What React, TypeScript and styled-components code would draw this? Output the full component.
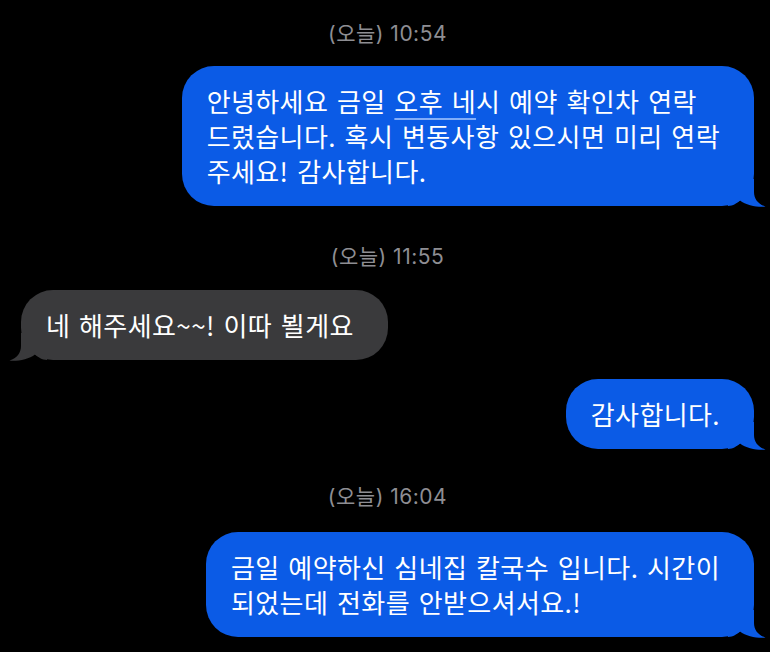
import React from "react";
import styled, { createGlobalStyle } from "styled-components";

const Global = createGlobalStyle`
  html, body { margin: 0; padding: 0; background: #000; }
  body { width: 770px; height: 652px; overflow: hidden; }
`;

const BLUE = "#0b5be6";
const GRAY = "#3a3a3c";

const Screen = styled.div`
  width: 770px;
  height: 652px;
  background: #000;
  display: flex;
  flex-direction: column;
  padding: 22px 16px 0 21px;
  box-sizing: border-box;
  font-family: "Noto Sans CJK KR", "Noto Sans", sans-serif;
  overflow: hidden;
`;

const Stamp = styled.div<{ $top: number; $bottom: number }>`
  align-self: center;
  margin: ${(p) => p.$top}px 0 ${(p) => p.$bottom}px 0;
  font-family: "Inter", "Noto Sans CJK KR", sans-serif;
  font-size: 21px;
  line-height: 24px;
  color: #8e8e93;
  letter-spacing: 0.5px;
`;

const Row = styled.div<{ $mine: boolean; $gap: number }>`
  display: flex;
  justify-content: ${(p) => (p.$mine ? "flex-end" : "flex-start")};
  margin-bottom: ${(p) => p.$gap}px;
`;

const Bubble = styled.div<{ $mine: boolean }>`
  position: relative;
  background: ${(p) => (p.$mine ? BLUE : GRAY)};
  color: #fff;
  border-radius: 32px;
  padding: 17px 34px 18px 25px;
  font-size: 26px;
  line-height: 35px;
  letter-spacing: 0.4px;
  word-spacing: 2.5px;
  white-space: pre-line;
`;

const Tail = styled.svg<{ $mine: boolean }>`
  position: absolute;
  bottom: -1px;
  width: 38px;
  height: 28px;
  ${(p) =>
    p.$mine
      ? "right: -12px;"
      : "left: -12px; transform: scaleX(-1);"}
`;

const Link = styled.span`
  text-decoration: underline;
  text-decoration-color: rgba(170, 200, 255, 0.75);
  text-decoration-thickness: 1.5px;
  text-underline-offset: 6px;
`;

const BubbleTail = ({ mine }: { mine: boolean }) => (
  <Tail $mine={mine} viewBox="0 0 38 28">
    <path
      d="M0 0 H26 V13 C26 20 30 25 37.5 27.6 C30 28.4 18 26.5 12 21.5 C9 24 5 27 0 27 Z"
      fill={mine ? BLUE : GRAY}
    />
  </Tail>
);

const Message = ({
  mine,
  gap,
  children,
}: {
  mine: boolean;
  gap: number;
  children: React.ReactNode;
}) => (
  <Row $mine={mine} $gap={gap}>
    <Bubble $mine={mine}>
      {children}
      <BubbleTail mine={mine} />
    </Bubble>
  </Row>
);

export default function App() {
  return (
    <>
      <Global />
      <Screen>
        <Stamp $top={0} $bottom={20}>(오늘) 10:54</Stamp>
        <Message mine gap={0}>
          {"안녕하세요 금일 "}
          <Link>오후 네</Link>
          {"시 예약 확인차 연락\n드렸습니다. 혹시 변동사항 있으시면 미리 연락\n주세요! 감사합니다."}
        </Message>
        <Stamp $top={39} $bottom={21}>(오늘) 11:55</Stamp>
        <Message mine={false} gap={19}>
          네 해주세요~~! 이따 뵐게요
        </Message>
        <Message mine gap={0}>
          감사합니다.
        </Message>
        <Stamp $top={36} $bottom={23}>(오늘) 16:04</Stamp>
        <Message mine gap={0}>
          {"금일 예약하신 심네집 칼국수 입니다. 시간이\n되었는데 전화를 안받으셔서요.!"}
        </Message>
      </Screen>
    </>
  );
}
